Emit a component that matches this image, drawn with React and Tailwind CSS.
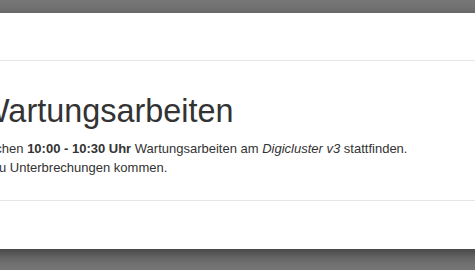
import React from "react";

const App = () => {
    return (
        <div className="h-[270px] w-[475px] overflow-hidden bg-[#777777] pt-[13px] font-['Liberation_Sans',Arial,sans-serif] text-[#333333]">
            {/* MODAL */}
            <div className="-ml-[110px] w-[700px] bg-white shadow-[0_5px_15px_rgba(0,0,0,0.5)]">
                <div className="h-[48px] border-b border-[#e5e5e5]"></div>
                <div className="h-[139px] px-[15px] pt-[33px]">
                    <h1 className="ml-[74px] text-[32.4px] leading-[1.1]">Wartungsarbeiten</h1>
                    <p className="mt-[9px] text-[13px] leading-[19px]">
                        Es werden zwischen <b>10:00 - 10:30 Uhr</b> Wartungsarbeiten am <i>Digicluster v3</i> stattfinden.
                        <br />
                        Es kann daher zu Unterbrechungen kommen.
                    </p>
                </div>
                <div className="h-[49px] border-t border-[#e5e5e5]"></div>
            </div>
        </div>
    );
};

export default App;
